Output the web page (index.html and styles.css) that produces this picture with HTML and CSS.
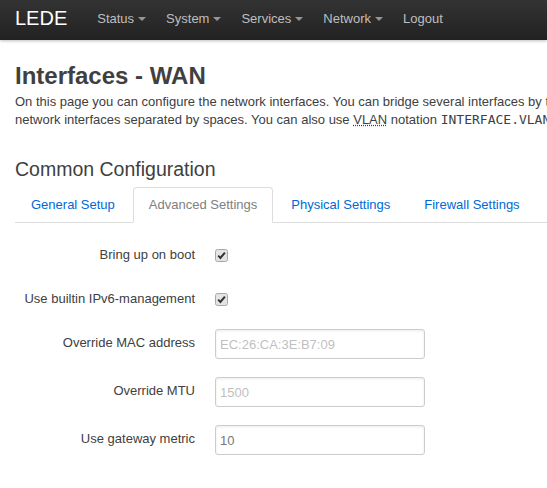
FILE: index.html
```html
<!DOCTYPE html>
<html lang="en">
<head>
<meta charset="utf-8">
<title>Interfaces - WAN - LEDE</title>
<link rel="stylesheet" href="styles.css">
</head>
<body>
<header class="topbar">
  <a class="brand" href="#">LEDE</a>
  <ul class="nav">
    <li><a href="#">Status<span class="caret"></span></a></li>
    <li><a href="#">System<span class="caret"></span></a></li>
    <li><a href="#">Services<span class="caret"></span></a></li>
    <li><a href="#">Network<span class="caret"></span></a></li>
    <li><a href="#">Logout</a></li>
  </ul>
</header>

<main class="container">
  <h2 class="page-title">Interfaces - WAN</h2>
  <p class="desc">On this page you can configure the network interfaces. You can bridge several interfaces by ticking the "bridge interfaces" field and enter the names of several network interfaces separated by spaces. You can also use <abbr title="Virtual Local Area Network">VLAN</abbr> notation <samp>INTERFACE.VLANNR</samp> (<abbr title="for example">e.g.</abbr>: <samp>eth0.1</samp>).</p>

  <fieldset class="section">
    <h3 class="legend">Common Configuration</h3>
    <ul class="tabs">
      <li><a href="#">General Setup</a></li>
      <li class="active"><a href="#">Advanced Settings</a></li>
      <li><a href="#">Physical Settings</a></li>
      <li><a href="#">Firewall Settings</a></li>
    </ul>

    <div class="pane">
      <div class="row row-check">
        <label class="title">Bring up on boot</label>
        <span class="check" role="checkbox" aria-checked="true">
          <svg width="13" height="13" viewBox="0 0 13 13"><rect x="0.5" y="0.5" width="12" height="12" rx="2" fill="#e4e4e4" stroke="#a8a8a8"/><path d="M3.2 6.6 L5.4 8.9 L9.9 3.6" fill="none" stroke="#333" stroke-width="2"/></svg>
        </span>
      </div>
      <div class="row row-check">
        <label class="title">Use builtin IPv6-management</label>
        <span class="check" role="checkbox" aria-checked="true">
          <svg width="13" height="13" viewBox="0 0 13 13"><rect x="0.5" y="0.5" width="12" height="12" rx="2" fill="#e4e4e4" stroke="#a8a8a8"/><path d="M3.2 6.6 L5.4 8.9 L9.9 3.6" fill="none" stroke="#333" stroke-width="2"/></svg>
        </span>
      </div>
      <div class="row row-input">
        <label class="title">Override MAC address</label>
        <input class="text" type="text" placeholder="EC:26:CA:3E:B7:09">
      </div>
      <div class="row row-input">
        <label class="title">Override MTU</label>
        <input class="text" type="text" placeholder="1500">
      </div>
      <div class="row row-input">
        <label class="title">Use gateway metric</label>
        <input class="text" type="text" value="10">
      </div>
    </div>
  </fieldset>
</main>
</body>
</html>
```

FILE: styles.css
```css
html, body {
  overflow: hidden;
}
body {
  margin: 0;
  background: #fff;
  color: #404040;
  font-family: "Liberation Sans", Arial, Helvetica, sans-serif;
  font-size: 13px;
  line-height: 18px;
}

.topbar {
  display: flex;
  align-items: flex-start;
  height: 40px;
  padding-left: 15px;
  background: linear-gradient(to bottom, #333333, #222222);
  box-shadow: 0 1px 3px rgba(0, 0, 0, 0.25);
}
.brand {
  display: block;
  padding: 8px 20px 12px 0;
  font-size: 20px;
  line-height: 20px;
  font-weight: 200;
  color: #ffffff;
  text-decoration: none;
}
.nav {
  display: flex;
  margin: 0;
  padding: 0;
  list-style: none;
}
.nav a {
  display: block;
  padding: 9px 10px 12px;
  line-height: 19px;
  font-size: 13px;
  color: #bfbfbf;
  text-decoration: none;
}
.caret {
  display: inline-block;
  vertical-align: top;
  width: 0;
  height: 0;
  margin-top: 8px;
  margin-left: 4px;
  border-top: 4px solid #ffffff;
  border-left: 4px solid transparent;
  border-right: 4px solid transparent;
  opacity: 0.5;
}

.container {
  width: 940px;
  padding: 0 15px;
}
.page-title {
  margin: 19px 0 0;
  font-size: 24px;
  line-height: 34px;
  font-weight: bold;
  color: #404040;
}
.desc {
  margin: 0;
}
abbr {
  text-decoration: underline dotted;
}
samp {
  font-family: "DejaVu Sans Mono", monospace;
  font-size: 13px;
}

.section {
  margin: 0;
  padding: 0;
  border: 0;
}
.legend {
  margin: 30px 0 8px;
  font-size: 19.5px;
  line-height: 20px;
  font-weight: normal;
  color: #404040;
}
.tabs {
  display: flex;
  margin: 0;
  padding: 0;
  list-style: none;
  border-bottom: 1px solid #ddd;
}
.tabs li {
  margin: 0 2px -1px 0;
}
.tabs a {
  display: block;
  padding: 0 15px;
  line-height: 34px;
  border: 1px solid transparent;
  border-radius: 4px 4px 0 0;
  color: #0069d6;
  text-decoration: none;
}
.tabs .active a {
  color: #808080;
  background: #fff;
  border-color: #ddd;
  border-bottom-color: transparent;
}

.pane {
  padding-top: 19px;
}
.row {
  display: flex;
  margin-bottom: 18px;
}
.row-check {
  height: 26px;
  align-items: center;
}
.row-check + .row-input {
  margin-top: -1px;
}
.row-input {
  height: 30px;
  align-items: flex-start;
}
.title {
  width: 180px;
  margin-right: 20px;
  text-align: right;
  line-height: 18px;
  color: #404040;
}
.row-input .title {
  padding-top: 5px;
}
.check {
  display: block;
  width: 13px;
  height: 13px;
}
.check svg {
  display: block;
}
.text {
  box-sizing: border-box;
  width: 210px;
  height: 30px;
  margin: 0;
  padding: 5px 4px;
  border: 1px solid #ccc;
  border-radius: 3px;
  box-shadow: inset 0 1px 3px rgba(0, 0, 0, 0.08);
  font-family: "Liberation Sans", Arial, sans-serif;
  font-size: 13px;
  line-height: 18px;
  color: #777;
  background: #fff;
}
.text::placeholder {
  color: #bfbfbf;
}
```
